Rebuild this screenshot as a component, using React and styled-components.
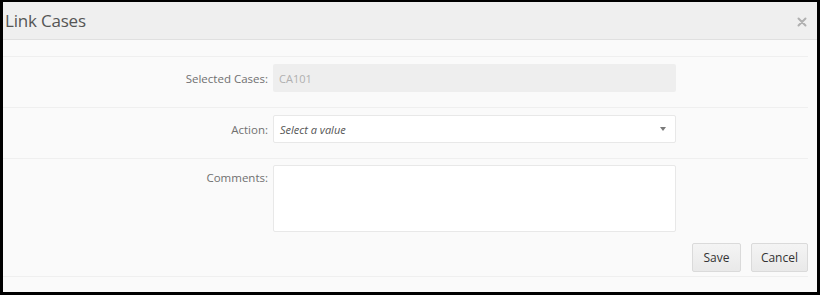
import styled, { createGlobalStyle } from "styled-components";

const GlobalStyle = createGlobalStyle`
  body {
    margin: 0;
    background: #fff;
    font-family: "Open Sans", "Noto Sans", sans-serif;
  }
`;

const App = () => {
  return (
    <>
      <GlobalStyle />
      <Dialog>
        <Header>
          <Title>Link Cases</Title>
          <CloseButton aria-label="Close">
            <svg width="10" height="10" viewBox="0 0 10 10">
              <path
                d="M1.5 1.5 L8.5 8.5 M8.5 1.5 L1.5 8.5"
                stroke="#b0b0b0"
                strokeWidth="2"
                strokeLinecap="round"
              />
            </svg>
          </CloseButton>
        </Header>
        <Body>
          <Row>
            <Label>Selected Cases:</Label>
            <ReadOnlyField>CA101</ReadOnlyField>
          </Row>
          <Row>
            <Label>Action:</Label>
            <SelectField>
              <Placeholder>Select a value</Placeholder>
              <Caret />
            </SelectField>
          </Row>
          <Row $last>
            <Label $top>Comments:</Label>
            <TextArea />
            <Actions>
              <Button>Save</Button>
              <Button>Cancel</Button>
            </Actions>
          </Row>
        </Body>
      </Dialog>
    </>
  );
};

const Dialog = styled.div`
  width: 820px;
  height: 295px;
  box-sizing: border-box;
  border: 3px solid #000;
  border-top-width: 2px;
  background: #fafafa;
  display: flex;
  flex-direction: column;
`;

const Header = styled.div`
  height: 38px;
  flex-shrink: 0;
  box-sizing: border-box;
  background: #efefef;
  border-bottom: 1px solid #e0e0e0;
  display: flex;
  align-items: center;
  justify-content: space-between;
  padding: 0 10px 0 2px;
`;

const Title = styled.div`
  font-size: 17px;
  color: #555;
  letter-spacing: -0.2px;
`;

const CloseButton = styled.div`
  display: flex;
  align-items: center;
  margin-top: 2px;
`;

const Body = styled.div`
  padding: 16px 9px 0 0;
`;

const Row = styled.div`
  display: grid;
  grid-template-columns: 265px 403px 1fr;
  column-gap: 5px;
  align-items: ${(props) => (props.$last ? "start" : "center")};
  border-top: 1px solid #efefef;
  border-bottom: ${(props) => (props.$last ? "1px solid #efefef" : "none")};
  padding: ${(props) => (props.$last ? "6px 0 4px" : "7px 0 15px")};
`;

const Label = styled.div`
  text-align: right;
  font-size: 11.5px;
  color: #707070;
  padding-top: ${(props) => (props.$top ? "5px" : "0")};
`;

const fieldBase = `
  height: 28px;
  box-sizing: border-box;
  border-radius: 2px;
  display: flex;
  align-items: center;
  padding: 0 6px;
  font-size: 11px;
`;

const ReadOnlyField = styled.div`
  ${fieldBase}
  background: #eeeeee;
  color: #b0b0b0;
`;

const SelectField = styled.div`
  ${fieldBase}
  background: #fff;
  border: 1px solid #e8e8e8;
  justify-content: space-between;
  padding-right: 9px;
`;

const Placeholder = styled.span`
  font-style: italic;
  color: #555;
`;

const Caret = styled.span`
  width: 0;
  height: 0;
  border-left: 3.5px solid transparent;
  border-right: 3.5px solid transparent;
  border-top: 4px solid #7a7a7a;
`;

const TextArea = styled.div`
  grid-column: 2;
  height: 67px;
  box-sizing: border-box;
  background: #fff;
  border: 1px solid #e8e8e8;
  border-radius: 2px;
`;

const Actions = styled.div`
  grid-column: 1 / -1;
  display: flex;
  justify-content: flex-end;
  gap: 10px;
  margin-top: 11px;
`;

const Button = styled.div`
  height: 29px;
  box-sizing: border-box;
  padding: 0 9px;
  min-width: 49px;
  display: flex;
  align-items: center;
  justify-content: center;
  font-size: 12px;
  color: #333;
  background: linear-gradient(#f4f4f4, #e9e9e9);
  border: 1px solid #dadada;
  border-radius: 2px;
`;

export default App;
